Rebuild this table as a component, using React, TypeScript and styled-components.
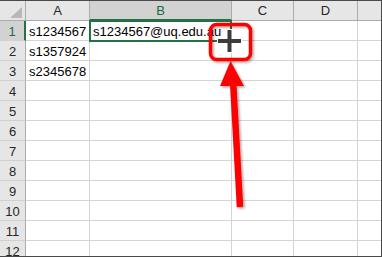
import React from "react";
import styled, { createGlobalStyle, css } from "styled-components";

const Global = createGlobalStyle`
  html, body { margin: 0; padding: 0; background: #ffffff; }
  body { font-family: "Liberation Sans", Arial, sans-serif; }
`;

const Frame = styled.div`
  position: relative;
  width: 382px;
  height: 257px;
  box-sizing: border-box;
  border-top: 1px solid #4a4a4a;
  border-right: 1px solid #4a4a4a;
  border-bottom: 1px solid #4a4a4a;
  overflow: hidden;
  background: #ffffff;
`;

const Sheet = styled.div`
  display: grid;
  grid-template-columns: 26px 64px 142px 62px 64px 40px;
  grid-auto-rows: 20px;
`;

const Corner = styled.div`
  position: relative;
  box-sizing: border-box;
  background: #e6e6e6;
  border-right: 1px solid #ababab;
  border-bottom: 1px solid #ababab;
  &::after {
    content: "";
    position: absolute;
    right: 3px;
    bottom: 2px;
    width: 12px;
    height: 11px;
    background: #b8b8b8;
    clip-path: polygon(100% 0, 100% 100%, 0 100%);
  }
`;

const ColHead = styled.div<{ $active?: boolean }>`
  box-sizing: border-box;
  display: flex;
  align-items: center;
  justify-content: center;
  background: #e6e6e6;
  border-right: 1px solid #ababab;
  border-bottom: 1px solid #ababab;
  color: #262626;
  font-size: 13px;
  ${(p) =>
    p.$active &&
    css`
      background: #d2d2d2;
      color: #1d6a3f;
      border-bottom: 2px solid #217346;
    `}
`;

const RowHead = styled.div<{ $active?: boolean }>`
  box-sizing: border-box;
  display: flex;
  align-items: center;
  justify-content: center;
  background: #e6e6e6;
  border-right: 1px solid #ababab;
  border-bottom: 1px solid #d0d0d0;
  color: #262626;
  font-size: 13px;
  padding-top: 1px;
  ${(p) =>
    p.$active &&
    css`
      background: #d2d2d2;
      color: #1d6a3f;
      border-right: 2px solid #217346;
    `}
`;

const Cell = styled.div`
  box-sizing: border-box;
  border-right: 1px solid #d4d4d4;
  border-bottom: 1px solid #d4d4d4;
  font-size: 13px;
  color: #000000;
  line-height: 19px;
  padding: 1px 0 0 3px;
  white-space: nowrap;
  overflow: visible;
`;

const Selection = styled.div`
  position: absolute;
  left: 89px;
  top: 19px;
  width: 143px;
  height: 22px;
  box-sizing: border-box;
  border: 2px solid #217346;
  pointer-events: none;
`;

const Overlay = styled.svg`
  position: absolute;
  left: 0;
  top: -1px;
  pointer-events: none;
`;

const columns = ["A", "B", "C", "D", ""];
const values: Record<number, string[]> = {
  1: ["s1234567", "s1234567@uq.edu.au"],
  2: ["s1357924"],
  3: ["s2345678"],
};

export default function App() {
  const rows = Array.from({ length: 12 }, (_, i) => i + 1);
  return (
    <>
      <Global />
      <Frame>
        <Sheet>
          <Corner />
          {columns.map((c, i) => (
            <ColHead key={i} $active={c === "B"}>
              {c}
            </ColHead>
          ))}
          {rows.map((r) => (
            <React.Fragment key={r}>
              <RowHead $active={r === 1}>{r}</RowHead>
              {columns.map((c, i) => (
                <Cell key={c + i}>{values[r]?.[i] ?? ""}</Cell>
              ))}
            </React.Fragment>
          ))}
        </Sheet>
        <Selection />
        <Overlay width="382" height="257" viewBox="0 0 382 257">
          <defs>
            <filter id="shade" x="-20%" y="-20%" width="140%" height="140%">
              <feDropShadow dx="1.5" dy="1.5" stdDeviation="1.2" floodColor="#000" floodOpacity="0.35" />
            </filter>
          </defs>
          {/* fill-handle cursor */}
          <g stroke="#ffffff" strokeWidth="6">
            <line x1="217" y1="41" x2="242" y2="41" />
            <line x1="229.5" y1="29" x2="229.5" y2="53" />
          </g>
          <g stroke="#3c3c3c" strokeWidth="4">
            <line x1="218" y1="41" x2="241" y2="41" />
            <line x1="229.5" y1="30" x2="229.5" y2="52" />
          </g>
          {/* callout box and arrow */}
          <g filter="url(#shade)">
            <rect x="210.5" y="24.5" width="40" height="35" rx="6" fill="none" stroke="#ff0000" strokeWidth="3.5" />
            <line x1="233" y1="80" x2="240" y2="207" stroke="#ff0000" strokeWidth="6.5" />
            <polygon points="230.5,61 220,86 244,86" fill="#ff0000" />
          </g>
        </Overlay>
      </Frame>
    </>
  );
}
